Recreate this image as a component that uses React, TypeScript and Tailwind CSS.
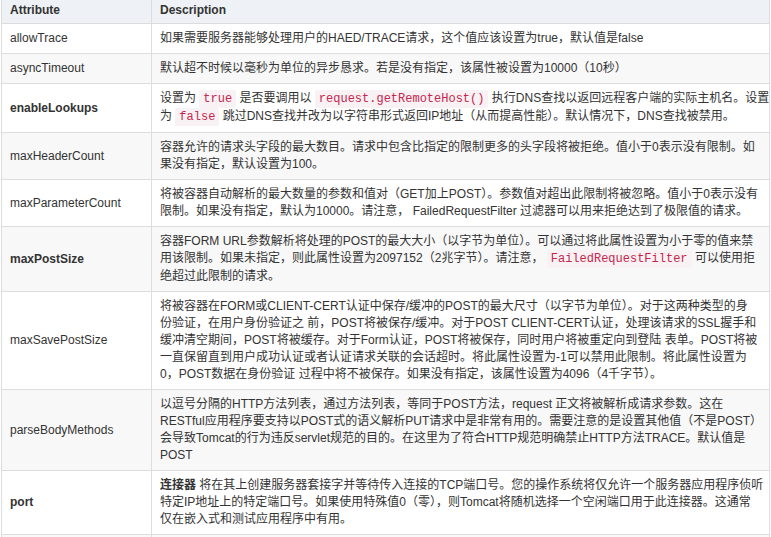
import type { ReactNode } from "react";

const Code = ({ children }: { children: ReactNode }) => (
  <code className="font-['Liberation_Mono','DejaVu_Sans_Mono',monospace] text-[12px] text-[#c7254e] bg-[#f9f2f4] px-1 py-[2px] rounded-[2px]">
    {children}
  </code>
);

// each description is kept as the lines shown in the docs page
const rows: { name: string; bold?: boolean; lines: ReactNode[] }[] = [
  {
    name: "allowTrace",
    lines: ["如果需要服务器能够处理用户的HAED/TRACE请求，这个值应该设置为true，默认值是false"],
  },
  {
    name: "asyncTimeout",
    lines: ["默认超不时候以毫秒为单位的异步恳求。若是没有指定，该属性被设置为10000（10秒）"],
  },
  {
    name: "enableLookups",
    bold: true,
    lines: [
      <>
        设置为 <Code>true</Code> 是否要调用以 <Code>request.getRemoteHost()</Code> 执行DNS查找以返回远程客户端的实际主机名。设置
      </>,
      <>
        为 <Code>false</Code> 跳过DNS查找并改为以字符串形式返回IP地址（从而提高性能）。默认情况下，DNS查找被禁用。
      </>,
    ],
  },
  {
    name: "maxHeaderCount",
    lines: [
      "容器允许的请求头字段的最大数目。请求中包含比指定的限制更多的头字段将被拒绝。值小于0表示没有限制。如",
      "果没有指定，默认设置为100。",
    ],
  },
  {
    name: "maxParameterCount",
    lines: [
      "将被容器自动解析的最大数量的参数和值对（GET加上POST）。参数值对超出此限制将被忽略。值小于0表示没有",
      "限制。如果没有指定，默认为10000。请注意， FailedRequestFilter 过滤器可以用来拒绝达到了极限值的请求。",
    ],
  },
  {
    name: "maxPostSize",
    bold: true,
    lines: [
      "容器FORM URL参数解析将处理的POST的最大大小（以字节为单位）。可以通过将此属性设置为小于零的值来禁",
      <>
        用该限制。如果未指定，则此属性设置为2097152（2兆字节）。请注意， <Code>FailedRequestFilter</Code> 可以使用拒
      </>,
      "绝超过此限制的请求。",
    ],
  },
  {
    name: "maxSavePostSize",
    lines: [
      "将被容器在FORM或CLIENT-CERT认证中保存/缓冲的POST的最大尺寸（以字节为单位）。对于这两种类型的身",
      "份验证，在用户身份验证之 前，POST将被保存/缓冲。对于POST CLIENT-CERT认证，处理该请求的SSL握手和",
      "缓冲清空期间，POST将被缓存。对于Form认证，POST将被保存，同时用户将被重定向到登陆 表单。POST将被",
      "一直保留直到用户成功认证或者认证请求关联的会话超时。将此属性设置为-1可以禁用此限制。将此属性设置为",
      "0，POST数据在身份验证 过程中将不被保存。如果没有指定，该属性设置为4096（4千字节）。",
    ],
  },
  {
    name: "parseBodyMethods",
    lines: [
      "以逗号分隔的HTTP方法列表，通过方法列表，等同于POST方法，request 正文将被解析成请求参数。这在",
      "RESTful应用程序要支持以POST式的语义解析PUT请求中是非常有用的。需要注意的是设置其他值（不是POST）",
      "会导致Tomcat的行为违反servlet规范的目的。在这里为了符合HTTP规范明确禁止HTTP方法TRACE。默认值是",
      "POST",
    ],
  },
  {
    name: "port",
    bold: true,
    lines: [
      <>
        <strong>连接器</strong> 将在其上创建服务器套接字并等待传入连接的TCP端口号。您的操作系统将仅允许一个服务器应用程序侦听
      </>,
      "特定IP地址上的特定端口号。如果使用特殊值0（零），则Tomcat将随机选择一个空闲端口用于此连接器。这通常",
      "仅在嵌入式和测试应用程序中有用。",
    ],
  },
];

const App = () => {
  return (
    <div className="bg-white h-[537px] overflow-hidden font-['Liberation_Sans','Noto_Sans_CJK_SC',sans-serif] text-[12px] leading-[17px] text-[#333]">
      <table className="ml-px w-[769px] border-collapse table-fixed">
        <colgroup>
          <col className="w-[150px]" />
          <col />
        </colgroup>
        <thead>
          <tr className="bg-[#eef1f5]">
            <th className="text-left font-bold pl-2 pr-1 pt-[2px] pb-[4px] border-x border-b border-[#ddd]">Attribute</th>
            <th className="text-left font-bold pl-2 pr-1 pt-[2px] pb-[4px] border-x border-b border-[#ddd]">Description</th>
          </tr>
        </thead>
        <tbody>
          {rows.map((row, i) => (
            <tr key={row.name} className={i % 2 === 1 ? "bg-[#f8f8f8]" : "bg-white"}>
              <td className={`align-middle pl-2 pr-1 py-[6px] border border-[#ddd] ${row.bold ? "font-bold" : ""}`}>
                {row.name}
              </td>
              <td className="align-middle pl-2 pr-0 py-[6px] border border-[#ddd]">
                {row.lines.map((line, j) => (
                  <div key={j} className="whitespace-nowrap">
                    {line}
                  </div>
                ))}
              </td>
            </tr>
          ))}
          {/* next row continues below the fold */}
          <tr className="bg-[#f8f8f8]">
            <td className="h-[40px] border border-[#ddd]" />
            <td className="h-[40px] border border-[#ddd]" />
          </tr>
        </tbody>
      </table>
    </div>
  );
};

export default App;
